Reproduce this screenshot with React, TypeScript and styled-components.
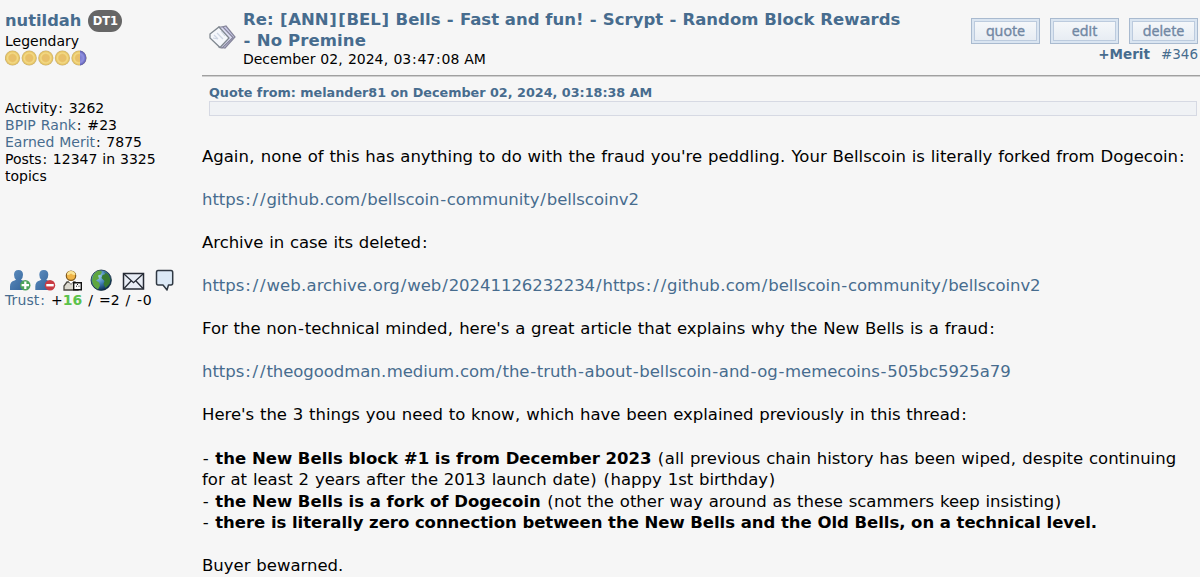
import * as React from "react";
import styled, { createGlobalStyle } from "styled-components";

const GlobalStyle = createGlobalStyle`
  body {
    margin: 0;
    background: #f6f6f6;
    color: #000;
    font-family: Verdana, "DejaVu Sans", sans-serif;
    overflow: hidden;
  }
`;

const Post = styled.div`
  display: flex;
  width: 1200px;
  height: 577px;
  background: #f6f6f6;
`;

const Sidebar = styled.aside`
  display: flex;
  flex-direction: column;
  flex: none;
  box-sizing: border-box;
  width: 202px;
  padding: 10px 0 0 5px;
  font-size: 14px;
  line-height: 17.1px;
`;

const Main = styled.main`
  flex: none;
  width: 998px;
`;

const Line = styled.div<{ $ls?: number; $strong?: boolean }>`
  white-space: nowrap;
  letter-spacing: ${(p) => p.$ls ?? 0}px;
  word-spacing: ${(p) => (p.$strong ? "0" : "0.034em")};

  b {
    word-spacing: 0;
  }
`;

const Wide = styled.span<{ $by: number }>`
  padding: 0 ${(p) => p.$by / 2}em;
`;

const Link = styled.a`
  color: #476c8e;
  text-decoration: none;
`;

const UserRow = styled.div`
  display: flex;
  align-items: center;
  gap: 7px;
  height: 22px;
  margin-bottom: 1px;
`;

const UserName = styled(Link)`
  font-size: 16.3px;
  font-weight: bold;
`;

const Badge = styled.span`
  width: 34px;
  height: 22px;
  border-radius: 11px;
  background: #666;
  color: #fff;
  font-size: 11.5px;
  font-weight: bold;
  line-height: 23px;
  text-align: center;
`;

const Coins = styled.svg`
  display: block;
  margin-bottom: 34px;
`;

const UserIcons = styled.svg`
  display: block;
  margin-top: 83px;
`;

const Positive = styled.b`
  color: #5cc24b;
`;

const Header = styled.header`
  display: flex;
  box-sizing: border-box;
  height: 77px;
  padding: 10px 2px 0 7px;
  border-bottom: 1px solid #cfcfcf;
  box-shadow: inset 0 -1px #a0a0a0;
`;

const TopicIcon = styled.svg`
  flex: none;
  margin: 15px 7px 0 0;
`;

const Subject = styled.div`
  flex: 1;
  font-size: 14px;
  line-height: 17px;
`;

const Title = styled.div`
  color: #476c8e;
  font-size: 16.5px;
  font-weight: bold;
  line-height: 20.5px;
`;

const Actions = styled.div`
  display: flex;
  flex-direction: column;
  align-items: flex-end;
  padding-top: 8px;
`;

const Buttons = styled.div`
  display: flex;
  gap: 10px;
`;

const Button = styled.button`
  box-sizing: border-box;
  width: 69px;
  height: 26px;
  padding: 0 0 1px;
  border: 1px solid #a9bacf;
  outline: 1px solid #bccbde;
  outline-offset: -4px;
  background: linear-gradient(#f7f9fb, #e5ebf2);
  box-shadow: inset 0 0 0 2px #dae5f1;
  color: #7187a3;
  font-family: "Open Sans", sans-serif;
  font-size: 14.3px;
  line-height: 20px;
  -webkit-text-stroke: 0.4px #7187a3;
`;

const PostLinks = styled.div`
  display: flex;
  gap: 11px;
  font-size: 13.5px;
  line-height: 21px;
`;

const QuoteHeader = styled.div`
  height: 17px;
  padding: 7px 0 0 7px;
  color: #476c8e;
  font-size: 12.75px;
  font-weight: bold;
  line-height: 17px;
`;

const QuoteBox = styled.div`
  box-sizing: border-box;
  height: 15px;
  margin: 0 3px 30px 7px;
  border: 1px solid #d6d9e3;
  background: #f0f2f5;
`;

const Body = styled.div`
  font-size: 16.5px;
  line-height: 21.54px;
`;

const Blank = styled.div`
  height: 21.54px;
`;

// extra room around punctuation, in em
const regular: Record<string, number> = {
  "/": 0.117,
  ":": 0.117,
  "-": 0.093,
  ".": 0.046,
  ",": 0.046,
  "(": 0.064,
  ")": 0.064,
};
const bold: Record<string, number> = { "-": 0.065, "[": 0.086, "]": 0.086 };

const Text = ({ children, strong }: { children: string; strong?: boolean }) => {
  const table = strong ? bold : regular;
  return (
    <>
      {children.split(/([/:\-.,()[\]])/).map((part, i) =>
        table[part] ? (
          <Wide key={i} $by={table[part]}>
            {part}
          </Wide>
        ) : (
          part
        ),
      )}
    </>
  );
};

const RankCoins = () => (
  <Coins width="86" height="16" viewBox="0 0 86 16">
    <defs>
      <radialGradient id="gold">
        <stop offset="0" stopColor="#e8bf6e" />
        <stop offset=".45" stopColor="#e8c066" />
        <stop offset=".65" stopColor="#f3da86" />
        <stop offset=".85" stopColor="#e6c464" />
        <stop offset="1" stopColor="#c2aa74" />
      </radialGradient>
      <radialGradient id="violet" gradientUnits="userSpaceOnUse" cx="74" cy="8" r="7.6">
        <stop offset="0" stopColor="#7373c8" />
        <stop offset=".6" stopColor="#9090e0" />
        <stop offset="1" stopColor="#5656ac" />
      </radialGradient>
    </defs>
    {[7.5, 24.2, 40.8, 57.4, 74].map((cx) => (
      <circle key={cx} cx={cx} cy="8" r="7.6" fill="url(#gold)" />
    ))}
    <path d="M75 .5a7.600 7.600 0 0 1 0 15z" fill="url(#violet)" />
  </Coins>
);

const UserIconRow = () => (
  <UserIcons width="172" height="23" viewBox="5 269 172 23">
    <defs>
      <linearGradient id="blue" x1="0" y1="0" x2="1" y2="1">
        <stop offset="0" stopColor="#5f8fc0" />
        <stop offset="1" stopColor="#2f5f96" />
      </linearGradient>
      <radialGradient id="sea" cx=".35" cy=".3" r=".75">
        <stop offset="0" stopColor="#a4d6ef" />
        <stop offset=".5" stopColor="#4380b8" />
        <stop offset="1" stopColor="#062648" />
      </radialGradient>
    </defs>
    {[0, 25.3].map((dx) => (
      <path
        key={dx}
        transform={`translate(${dx} 0)`}
        d="M10 290v-3.500q0-5 4.500-6l1.500-.8q-2-2-2-5 0-4.700 4.500-4.700t4.500 4.700q0 3-2 5l1.500.8q4.500 1 4.500 6v3.500z"
        fill="url(#blue)"
      />
    ))}
    <circle cx="25.3" cy="285.2" r="5.2" fill="#4da35b" />
    <path d="M25.300 281.500v7.400M21.600 285.200H29" stroke="#fff" strokeWidth="2.2" />
    <circle cx="50" cy="285.2" r="5.2" fill="#c83b43" />
    <path d="M46.300 285.200h7.400" stroke="#fff" strokeWidth="2.4" />
    <path d="M64 290v-4l3-4h8l3 4v4z" fill="#dcd9cf" stroke="#4a4740" strokeWidth="1.3" />
    <path d="M68 281l3 3.500 3-3.500" fill="#fff" stroke="#777" />
    <circle cx="71" cy="275.7" r="4.7" fill="#f0b548" stroke="#80591c" strokeWidth="1.2" />
    <path d="M67 275q0-4 4-4t4.500 4q-3 0-4.500-1.500-1.500 1.500-4 1.500" fill="#fbe596" />
    <path d="M73.700 282.700h7.600v7h-7.600z" fill="#fff" stroke="#111" strokeWidth="1.4" />
    <path d="M76 286.200h1M78.500 286.200h1M77.500 284v1" fill="none" stroke="#111" />
    <circle cx="101.2" cy="280.2" r="10.2" fill="url(#sea)" stroke="#102839" strokeWidth=".8" />
    <path d="M93 276q2-4.500 6-5.500l3 1-1 3-3 1 1 3-3 2 3 2 1 3-2 4q-4-2-5-5l-1-4z" fill="#5fa640" />
    <path d="M104 272l4 2 2.500 5-1 5-4 4-2-4 1-3-3-3 1-3 3-1z" fill="#377a30" />
    <path d="M123.500 273.500h20v15.500h-20z" fill="#e8edf5" stroke="#262b35" strokeWidth="1.5" />
    <path
      d="M124 274l9.500 8.700 9.500-8.700M124 288.500l7-7.500M143 288.500l-7-7.500"
      fill="none"
      stroke="#262b35"
      strokeWidth="1.3"
    />
    <path
      d="M158 270.500h13q1.700 0 1.700 2v10.500q0 2-1.700 2h-2.500l-1.500 5-4-5H158q-1.500 0-1.500-2v-10.500q0-2 1.500-2z"
      fill="#dce9f6"
      stroke="#303943"
      strokeWidth="1.5"
      strokeLinejoin="round"
    />
  </UserIcons>
);

const App = () => {
  return (
    <>
      <GlobalStyle />
      <Post>
        <Sidebar>
          <UserRow>
            <UserName>nutildah</UserName>
            <Badge>DT1</Badge>
          </UserRow>
          <Line>Legendary</Line>
          <RankCoins />
          <Line>
            <Text>Activity: 3262</Text>
          </Line>
          <Line $ls={0.05}>
            <Link>BPIP Rank</Link>
            <Text>: #23</Text>
          </Line>
          <Line>
            <Link>Earned Merit</Link>
            <Text>: 7875</Text>
          </Line>
          <Line>
            <Text>Posts: 12347 in 3325</Text>
          </Line>
          <Line>topics</Line>
          <UserIconRow />
          <Line $ls={0.1}>
            <Link>
              <Text>Trust:</Text>
            </Link>{" "}
            +<Positive>16</Positive>
            <Text> / =2 / -0</Text>
          </Line>
        </Sidebar>
        <Main>
          <Header>
            <TopicIcon width="27" height="26" viewBox="0 0 27 26">
              <path d="M13 2l4-1 9 11-10 11-5-1z" fill="#c9c9e8" stroke="#85859a" strokeWidth="1.2" />
              <path d="M10 2h4l10 10.500L13 23l-3-1z" fill="#dcdcf2" stroke="#85859a" strokeWidth="1.2" />
              <path d="M1 9l9-7 10 11-9 9.500L1 13z" fill="#f5f7fb" stroke="#808890" strokeWidth="1.3" />
              <path d="M5 10l4 4M8 8l6 6M12 6l4 5M4 13l5 1" stroke="#cdd5e2" strokeWidth="1.2" />
            </TopicIcon>
            <Subject>
              <Title>
                <Line $strong>
                  <Text strong>Re: [ANN][BEL] Bells - Fast and fun! - Scrypt - Random Block Rewards</Text>
                </Line>
                <Line $strong $ls={0.1}>
                  <Text strong>- No Premine</Text>
                </Line>
              </Title>
              <Line $ls={-0.03}>
                <Text>December 02, 2024, 03:47:08 AM</Text>
              </Line>
            </Subject>
            <Actions>
              <Buttons>
                <Button>quote</Button>
                <Button>edit</Button>
                <Button>delete</Button>
              </Buttons>
              <PostLinks>
                <Link>
                  <b>+Merit</b>
                </Link>
                <Link>#346</Link>
              </PostLinks>
            </Actions>
          </Header>
          <QuoteHeader>
            <Line $strong>Quote from: melander81 on December 02, 2024, 03:18:38 AM</Line>
          </QuoteHeader>
          <QuoteBox />
          <Body>
            <Line>
              <Text>
                Again, none of this has anything to do with the fraud you're peddling. Your Bellscoin is literally forked from Dogecoin:
              </Text>
            </Line>
            <Blank />
            <Line $ls={-0.06}>
              <Link>
                <Text>https://github.com/bellscoin-community/bellscoinv2</Text>
              </Link>
            </Line>
            <Blank />
            <Line $ls={-0.04}>
              <Text>Archive in case its deleted:</Text>
            </Line>
            <Blank />
            <Line $ls={-0.04}>
              <Link>
                <Text>
                  https://web.archive.org/web/20241126232234/https://github.com/bellscoin-community/bellscoinv2
                </Text>
              </Link>
            </Line>
            <Blank />
            <Line $ls={-0.02}>
              <Text>
                For the non-technical minded, here's a great article that explains why the New Bells is a fraud:
              </Text>
            </Line>
            <Blank />
            <Line $ls={-0.06}>
              <Link>
                <Text>https://theogoodman.medium.com/the-truth-about-bellscoin-and-og-memecoins-505bc5925a79</Text>
              </Link>
            </Line>
            <Blank />
            <Line $ls={-0.02}>
              <Text>Here's the 3 things you need to know, which have been explained previously in this thread:</Text>
            </Line>
            <Blank />
            <Line>
              <Text>- </Text>
              <b>the New Bells block #1 is from December 2023</b>
              <Text> (all previous chain history has been wiped, despite continuing</Text>
            </Line>
            <Line>
              <Text>for at least 2 years after the 2013 launch date) (happy 1st birthday)</Text>
            </Line>
            <Line>
              <Text>- </Text>
              <b>the New Bells is a fork of Dogecoin</b>
              <Text> (not the other way around as these scammers keep insisting)</Text>
            </Line>
            <Line $ls={-0.04}>
              <Text>- </Text>
              <b>there is literally zero connection between the New Bells and the Old Bells, on a technical level.</b>
            </Line>
            <Blank />
            <Line>Buyer bewarned.</Line>
          </Body>
        </Main>
      </Post>
    </>
  );
};

export default App;
